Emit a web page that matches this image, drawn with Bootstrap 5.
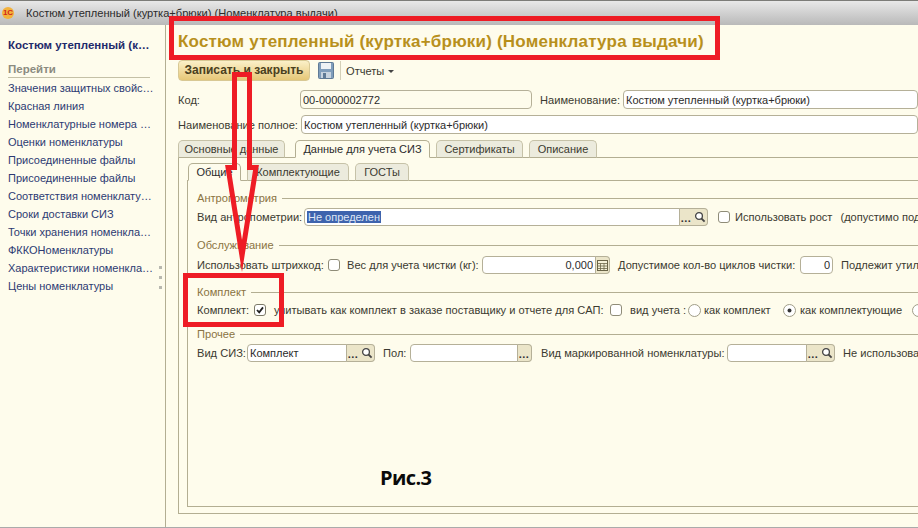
<!DOCTYPE html>
<html lang="ru">
<head>
    <meta charset="UTF-8">
    <meta name="viewport" content="width=device-width, initial-scale=1.0">
    <title>Костюм утепленный (куртка+брюки) (Номенклатура выдачи)</title>
    <link href="https://cdn.jsdelivr.net/npm/bootstrap@5.3.0/dist/css/bootstrap.min.css" rel="stylesheet">
    <style>
        html, body { height: 528px; overflow: hidden; }
        body { background: #fefcec; color: #3b3a30; font: 11.1px/14px "Liberation Sans", Arial, sans-serif; }
        .shell { width: 918px; height: 528px; overflow: hidden; position: relative; border-bottom: 1px solid #aaa; }

        .win-title { height: 25px; flex: none; padding-left: 26px; border-top: 1px solid #7c7c78; background: linear-gradient(#e8e8e8, #b9b9b9); color: #2b2b2b; position: relative; }
        .logo-1c { position: absolute; left: 2px; top: 6px; width: 12px; height: 12px; border-radius: 50%; background: #f3b23c; color: #d0261c; font: bold 8px/12px "Liberation Sans", sans-serif; text-align: center; }

        .side { width: 166px; flex: none; border-right: 1px solid #b3ae92; padding: 13px 6px 0 8px; position: relative; }
        .side-head { color: #1f2a6b; font-size: 11.5px; font-weight: bold; height: 14px; white-space: nowrap; }
        .side-sub { color: #8b8b80; font-size: 11.5px; font-weight: bold; height: 15px; margin: 11px 9px 0 0; border-bottom: 1px solid #c4c0a6; line-height: 13px; }
        .side .nav-link { padding: 0; height: 18px; line-height: 18px; color: #2c3a72; font-size: 11px; white-space: nowrap; }
        .side-links { margin-top: 1px; }
        .grip { position: absolute; left: 159px; top: 241px; display: flex; flex-direction: column; gap: 7px; }
        .grip i { display: block; width: 3px; height: 3px; background: #b8b8b0; }

        .page { flex: 1 1 0; min-width: 0; padding: 0 0 13px 12px; }
        .doc-title { height: 33px; flex: none; line-height: 33px; color: #b8901c; font-size: 17px; font-weight: bold; white-space: nowrap; letter-spacing: .2px; }
        .bar { height: 21px; margin-top: 2px; flex: none; }
        .btn-save { height: 21px; width: 132px; padding: 0; border: 1px solid #d8c894; border-radius: 4px; background: linear-gradient(#fbf0c8, #e6c777); color: #4a4020; font-size: 12px; font-weight: bold; line-height: 19px; }
        .bar-sep { width: 1px; height: 19px; background: #d4d0b8; }
        .caret-mark { display: inline-block; margin-left: 4px; vertical-align: 2px; border: 3px solid transparent; border-top-color: #444; border-bottom: 0; }

        .frow { display: flex; align-items: center; flex-wrap: nowrap; height: 19px; white-space: nowrap; flex: none; }
        .frow > * { flex: none; }
        .frow-sm { height: 18px; }
        .form-control.fld { height: 19px; min-height: 0; padding: 0 2px; border: 1px solid #b5b098; border-radius: 4px; background: #fff; color: #2b2b2b; font-size: 11px; line-height: 17px; box-shadow: none; font-family: inherit; }
        .form-control.fld-ro { background: #fefcec; }
        .input-group.pick { flex-wrap: nowrap; height: 18px; }
        .pick .form-control.fld { height: 18px; flex: 1 1 0; min-width: 0; line-height: 16px; }
        .pick-btn { width: 15px; height: 18px; padding: 0; border: 1px solid #b5b098; border-left: 0; background: #ebe5c9; display: flex; align-items: center; justify-content: center; color: #333; font-size: 11px; font-weight: bold; line-height: 14px; border-radius: 0; }
        .pick-btn:last-child { border-radius: 0 4px 4px 0; }
        .pick-dots { align-items: flex-end; letter-spacing: .5px; }
        .sel-text { background: #3e63ad; color: #dfe6f5; padding: 0 1px; }

        .nav-tabs.tabs-1c { border-bottom: 1px solid #b3ae92; height: 18px; flex: none; flex-wrap: nowrap; gap: 6px; }
        .tabs-1c .nav-link { height: 18px; padding: 0; margin: 0; border: 1px solid #c6c2a8; border-bottom: 1px solid #b3ae92; border-radius: 5px 5px 0 0; background: #ecebdd; color: #3b3a30; font-size: 11px; line-height: 16px; text-align: center; }
        .tabs-1c .nav-link.active { background: #fefcec; color: #2b2b2b; border-color: #b3ae92; border-bottom-color: #fefcec; }
        .tabs-1c .t-main { width: 107px; }
        .tabs-1c .t-siz { width: 135px; margin-left: 4px; }
        .tabs-1c .t-cert { width: 87px; }
        .tabs-1c .t-desc { width: 68px; }
        .tabs-1c .t-common { width: 53px; margin-left: 1px; }
        .tabs-1c .t-parts { width: 102px; }
        .tabs-1c .t-gost { width: 54px; }

        .panel-outer { flex: 1 1 0; min-height: 0; border-left: 1px solid #b3ae92; border-bottom: 1px solid #b3ae92; padding: 5px 0 6px 8px; }
        .panel-inner { flex: 1 1 0; min-height: 0; border-left: 1px solid #b3ae92; border-bottom: 1px solid #b3ae92; padding: 10px 0 0 9px; }
        .grp { display: flex; align-items: center; height: 14px; color: #8a7342; flex: none; white-space: nowrap; }
        .grp::after { content: ""; flex: 1 1 0; height: 1px; margin-left: 5px; background: #b3ae92; }

        .form-check-input.chk { width: 12px; height: 12px; margin: 0; border: 1px solid #8f8c78; border-radius: 3px; background-color: #fff; }
        .form-check-input.chk-far { margin-left: 10px; }
        .form-check-input.chk:checked { background-color: #fff; border-color: #7c7a68; background-size: 10px; background-image: url("data:image/svg+xml,%3csvg xmlns='http://www.w3.org/2000/svg' viewBox='0 0 10 10'%3e%3cpath fill='none' stroke='%23222' stroke-width='1.8' d='M2 5l2.2 2.4L8 2.4'/%3e%3c/svg%3e"); }
        .form-check-input.rad { width: 13px; height: 13px; margin: 0; border: 1px solid #a09d88; background-color: #fff; }
        .form-check-input.rad:checked { background-color: #fff; border-color: #a09d88; background-image: url("data:image/svg+xml,%3csvg xmlns='http://www.w3.org/2000/svg' viewBox='0 0 10 10'%3e%3ccircle cx='5' cy='5' r='1.8' fill='%23333'/%3e%3c/svg%3e"); background-size: 11px; }

        .fig-cap { margin: 104px 0 0 183px; font: bold 20px/24px "Open Sans", sans-serif; color: #0a0a0a; letter-spacing: -.6px; flex: none; }
        .marks { position: absolute; left: 0; top: 0; pointer-events: none; }

        /* widths taken from the picture */
        .w-kod-label { width: 122px; } .w-kod { width: 232px; } .w-name-label { width: 83px; margin-left: 8px; } .w-name { width: 295px; }
        .w-full-label { width: 123px; } .w-full { width: 617px; }
        .l-antro { width: 107px; } .p-antro { width: 404px; }
        .l-code { width: 131px; } .l-weight { width: 135px; margin-left: 7px; } .p-weight { width: 128px; } .l-cycles { width: 182px; margin-left: 8px; } .f-cycles { width: 33px; }
        .l-kit { width: 57px; } .l-sap { width: 336px; margin-left: 8px; } .l-type { width: 58px; margin-left: 8px; } .l-rad1 { width: 79px; margin-left: 3px; } .l-rad2 { width: 112px; margin-left: 4px; }
        .l-vid { width: 50px; } .p-vid { width: 128px; } .l-sex { width: 27px; margin-left: 8px; } .p-sex { width: 122px; } .l-mark { width: 186px; margin-left: 9px; } .p-mark { width: 108px; }
        .gap-l8 { margin-left: 8px; } .gap-l5 { margin-left: 5px; } .gap-l6 { margin-left: 6px; }
        .form-control.f-short { height: 18px; }
    </style>
</head>
<body>
<div class="shell d-flex flex-column">
    <!-- window caption -->
    <div class="win-title d-flex align-items-center">
        <span class="logo-1c">1С</span>
        <span>Костюм утепленный (куртка+брюки) (Номенклатура выдачи)</span>
    </div>

    <div class="d-flex flex-grow-1" style="min-height:0">
        <!-- left panel -->
        <div class="side">
            <div class="side-head">Костюм утепленный (к…</div>
            <div class="side-sub">Перейти</div>
            <nav class="nav flex-column side-links">
                <a class="nav-link" href="#">Значения защитных свойс…</a>
                <a class="nav-link" href="#">Красная линия</a>
                <a class="nav-link" href="#">Номенклатурные номера …</a>
                <a class="nav-link" href="#">Оценки номенклатуры</a>
                <a class="nav-link" href="#">Присоединенные файлы</a>
                <a class="nav-link" href="#">Присоединенные файлы</a>
                <a class="nav-link" href="#">Соответствия номенклату…</a>
                <a class="nav-link" href="#">Сроки доставки СИЗ</a>
                <a class="nav-link" href="#">Точки хранения номенкла…</a>
                <a class="nav-link" href="#">ФККОНоменклатуры</a>
                <a class="nav-link" href="#">Характеристики номенкла…</a>
                <a class="nav-link" href="#">Цены номенклатуры</a>
            </nav>
            <div class="grip"><i></i><i></i><i></i></div>
        </div>

        <!-- form -->
        <div class="page d-flex flex-column">
            <div class="doc-title">Костюм утепленный (куртка+брюки) (Номенклатура выдачи)</div>
            <div class="bar d-flex align-items-center">
                <button type="button" class="btn btn-save">Записать и закрыть</button>
                <svg class="ms-2" width="16" height="17" viewBox="0 0 16 17">
                    <rect x=".5" y=".5" width="15" height="16" rx="1" fill="#7f9dbb" stroke="#5f7a96"/>
                    <rect x="3" y="1" width="10" height="6" fill="#eef2f5"/>
                    <rect x="3" y="10" width="10" height="6" fill="#c7d3df"/>
                    <rect x="5" y="11" width="3" height="5" fill="#5f7a96"/>
                </svg>
                <span class="bar-sep gap-l6"></span>
                <span class="gap-l5">Отчеты<span class="caret-mark"></span></span>
            </div>

            <div class="frow" style="margin-top:9px">
                <span class="w-kod-label">Код:</span>
                <input class="form-control fld fld-ro w-kod" value="00-0000002772">
                <span class="w-name-label">Наименование:</span>
                <input class="form-control fld w-name" value="Костюм утепленный (куртка+брюки)">
            </div>
            <div class="frow" style="margin-top:6px">
                <span class="w-full-label">Наименование полное:</span>
                <input class="form-control fld w-full" value="Костюм утепленный (куртка+брюки)">
            </div>

            <ul class="nav nav-tabs tabs-1c" style="margin-top:6px">
                <li class="nav-item"><a class="nav-link t-main" href="#">Основные данные</a></li>
                <li class="nav-item"><a class="nav-link active t-siz" href="#">Данные для учета СИЗ</a></li>
                <li class="nav-item"><a class="nav-link t-cert" href="#">Сертификаты</a></li>
                <li class="nav-item"><a class="nav-link t-desc" href="#">Описание</a></li>
            </ul>

            <div class="panel-outer d-flex flex-column">
                <ul class="nav nav-tabs tabs-1c">
                    <li class="nav-item"><a class="nav-link active t-common" href="#">Общие</a></li>
                    <li class="nav-item"><a class="nav-link t-parts" href="#">Комплектующие</a></li>
                    <li class="nav-item"><a class="nav-link t-gost" href="#">ГОСТы</a></li>
                </ul>
                <div class="panel-inner d-flex flex-column">
                    <div class="grp">Антропометрия</div>
                    <div class="frow frow-sm" style="margin-top:3px">
                        <span class="l-antro">Вид антропометрии:</span>
                        <div class="input-group pick p-antro">
                            <div class="form-control fld"><span class="sel-text">Не определен</span></div>
                            <span class="pick-btn pick-dots">...</span>
                            <span class="pick-btn">
                                <svg width="12" height="12" viewBox="0 0 12 12"><circle cx="5" cy="5" r="3.4" fill="#fff" stroke="#444" stroke-width="1.3"/><path d="M7.6 7.6l3 3" stroke="#444" stroke-width="1.8"/></svg>
                            </span>
                        </div>
                        <input class="form-check-input chk chk-far" type="checkbox">
                        <span class="gap-l5">Использовать рост</span>
                        <span class="gap-l8">(допустимо под</span>
                    </div>

                    <div class="grp" style="margin-top:12px">Обслуживание</div>
                    <div class="frow frow-sm" style="margin-top:4px">
                        <span class="l-code">Использовать штрихкод:</span>
                        <input class="form-check-input chk" type="checkbox">
                        <span class="l-weight">Вес для учета чистки (кг):</span>
                        <div class="input-group pick p-weight">
                            <input class="form-control fld text-end" value="0,000">
                            <span class="pick-btn">
                                <svg width="11" height="11" viewBox="0 0 11 11"><rect x=".5" y=".5" width="10" height="10" fill="#f4f0d8" stroke="#6a6448"/><path d="M.5 3.5h10M.5 6h10M.5 8.5h10M3.5 3.5v7M7 3.5v7" stroke="#6a6448" stroke-width=".8"/></svg>
                            </span>
                        </div>
                        <span class="l-cycles">Допустимое кол-во циклов чистки:</span>
                        <input class="form-control fld f-short text-end f-cycles" value="0">
                        <span class="gap-l8">Подлежит утил</span>
                    </div>

                    <div class="grp" style="margin-top:11px">Комплект</div>
                    <div class="frow frow-sm" style="margin-top:2px">
                        <span class="l-kit">Комплект:</span>
                        <input class="form-check-input chk" type="checkbox" checked>
                        <span class="l-sap">учитывать как комплект в заказе поставщику и отчете для САП:</span>
                        <input class="form-check-input chk" type="checkbox">
                        <span class="l-type">вид учета :</span>
                        <input class="form-check-input rad" type="radio" name="kind">
                        <span class="l-rad1">как комплект</span>
                        <input class="form-check-input rad" type="radio" name="kind" checked>
                        <span class="l-rad2">как комплектующие</span>
                        <input class="form-check-input rad" type="radio" name="kind">
                    </div>

                    <div class="grp" style="margin-top:8px">Прочее</div>
                    <div class="frow frow-sm" style="margin-top:3px">
                        <span class="l-vid">Вид СИЗ:</span>
                        <div class="input-group pick p-vid">
                            <input class="form-control fld" value="Комплект">
                            <span class="pick-btn pick-dots">...</span>
                            <span class="pick-btn">
                                <svg width="12" height="12" viewBox="0 0 12 12"><circle cx="5" cy="5" r="3.4" fill="#fff" stroke="#444" stroke-width="1.3"/><path d="M7.6 7.6l3 3" stroke="#444" stroke-width="1.8"/></svg>
                            </span>
                        </div>
                        <span class="l-sex">Пол:</span>
                        <div class="input-group pick p-sex">
                            <input class="form-control fld" value="">
                            <span class="pick-btn pick-dots">...</span>
                        </div>
                        <span class="l-mark">Вид маркированной номенклатуры:</span>
                        <div class="input-group pick p-mark">
                            <input class="form-control fld" value="">
                            <span class="pick-btn pick-dots">...</span>
                            <span class="pick-btn">
                                <svg width="12" height="12" viewBox="0 0 12 12"><circle cx="5" cy="5" r="3.4" fill="#fff" stroke="#444" stroke-width="1.3"/><path d="M7.6 7.6l3 3" stroke="#444" stroke-width="1.8"/></svg>
                            </span>
                        </div>
                        <span class="gap-l8">Не использова</span>
                    </div>

                    <div class="fig-cap">Рис.3</div>
                </div>
            </div>
        </div>
    </div>

    <!-- red marks drawn over the screenshot -->
    <svg class="marks" width="918" height="528" viewBox="0 0 918 528" fill="none" stroke="#ee1c25" stroke-width="5">
        <rect x="171.500" y="18.500" width="546" height="39"/>
        <rect x="185.500" y="275.500" width="96" height="49"/>
        <path d="M234.500 74.500H249.500V167.500H256L242 256L228 167.500H234.500Z" stroke-miterlimit="10"/>
    </svg>
</div>
<script src="https://cdn.jsdelivr.net/npm/bootstrap@5.3.0/dist/js/bootstrap.bundle.min.js"></script>
</body>
</html>
